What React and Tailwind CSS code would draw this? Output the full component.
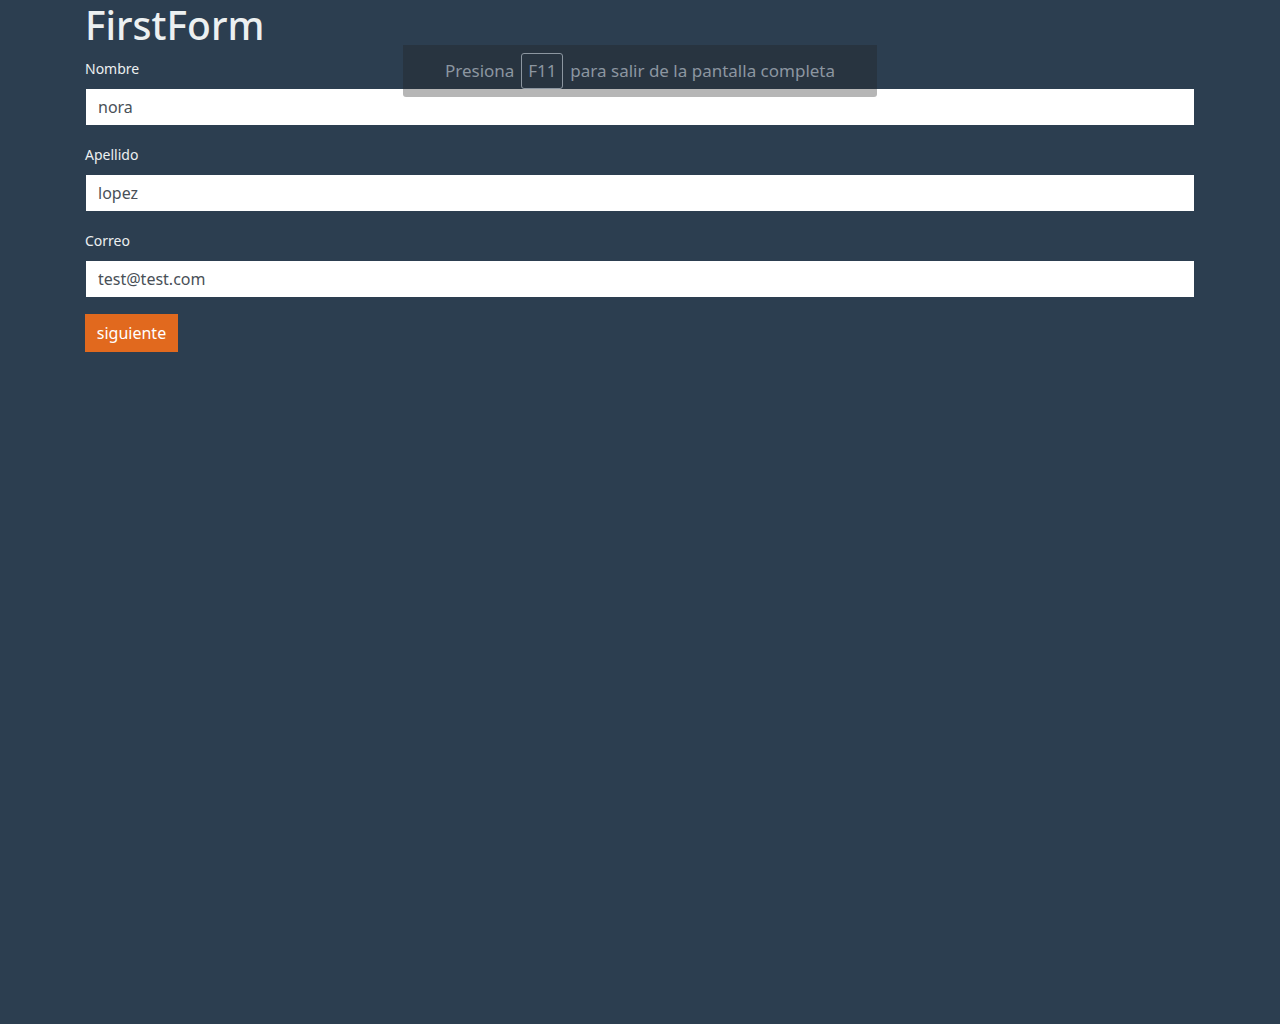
import React from "react";

const fields = [
  { label: "Nombre", value: "nora" },
  { label: "Apellido", value: "lopez" },
  { label: "Correo", value: "test@test.com" },
];

export default function App() {
  return (
    <div className="relative min-h-[1024px] bg-[#2c3e50] font-['Noto_Sans',sans-serif]">
      <div className="mx-auto w-[1110px]">
        <h1 className="h-[60px] pt-[1px] text-[39px] leading-[48px] font-medium text-[#ecf0f1]">FirstForm</h1>
        <form>
          {fields.map((f, i) => (
            <div key={f.label} className={i === fields.length - 1 ? "mb-[17px]" : "mb-[21px]"}>
              <label className="mb-[11px] block text-[14px] leading-[18px] text-[#ecf0f1]">{f.label}</label>
              <input
                readOnly
                value={f.value}
                className="mx-px block h-9 w-[1108px] bg-white px-3 text-[16px] text-[#495057] outline-none"
              />
            </div>
          ))}
          <button type="button" className="h-[38px] w-[93px] bg-[#e1691e] text-[16px] text-white">
            siguiente
          </button>
        </form>
      </div>

      <div className="absolute left-[403px] top-[45px] flex h-[52px] w-[474px] items-start justify-center rounded-b-[3px] bg-[rgba(32,32,34,0.33)] pt-2">
        <div className="flex items-center gap-[7px] text-[17px] text-[#8c96a0]">
          <span>Presiona</span>
          <span className="flex h-9 w-[42px] items-center justify-center rounded-[3px] border border-[#8c96a0]">F11</span>
          <span>para salir de la pantalla completa</span>
        </div>
      </div>
    </div>
  );
}
